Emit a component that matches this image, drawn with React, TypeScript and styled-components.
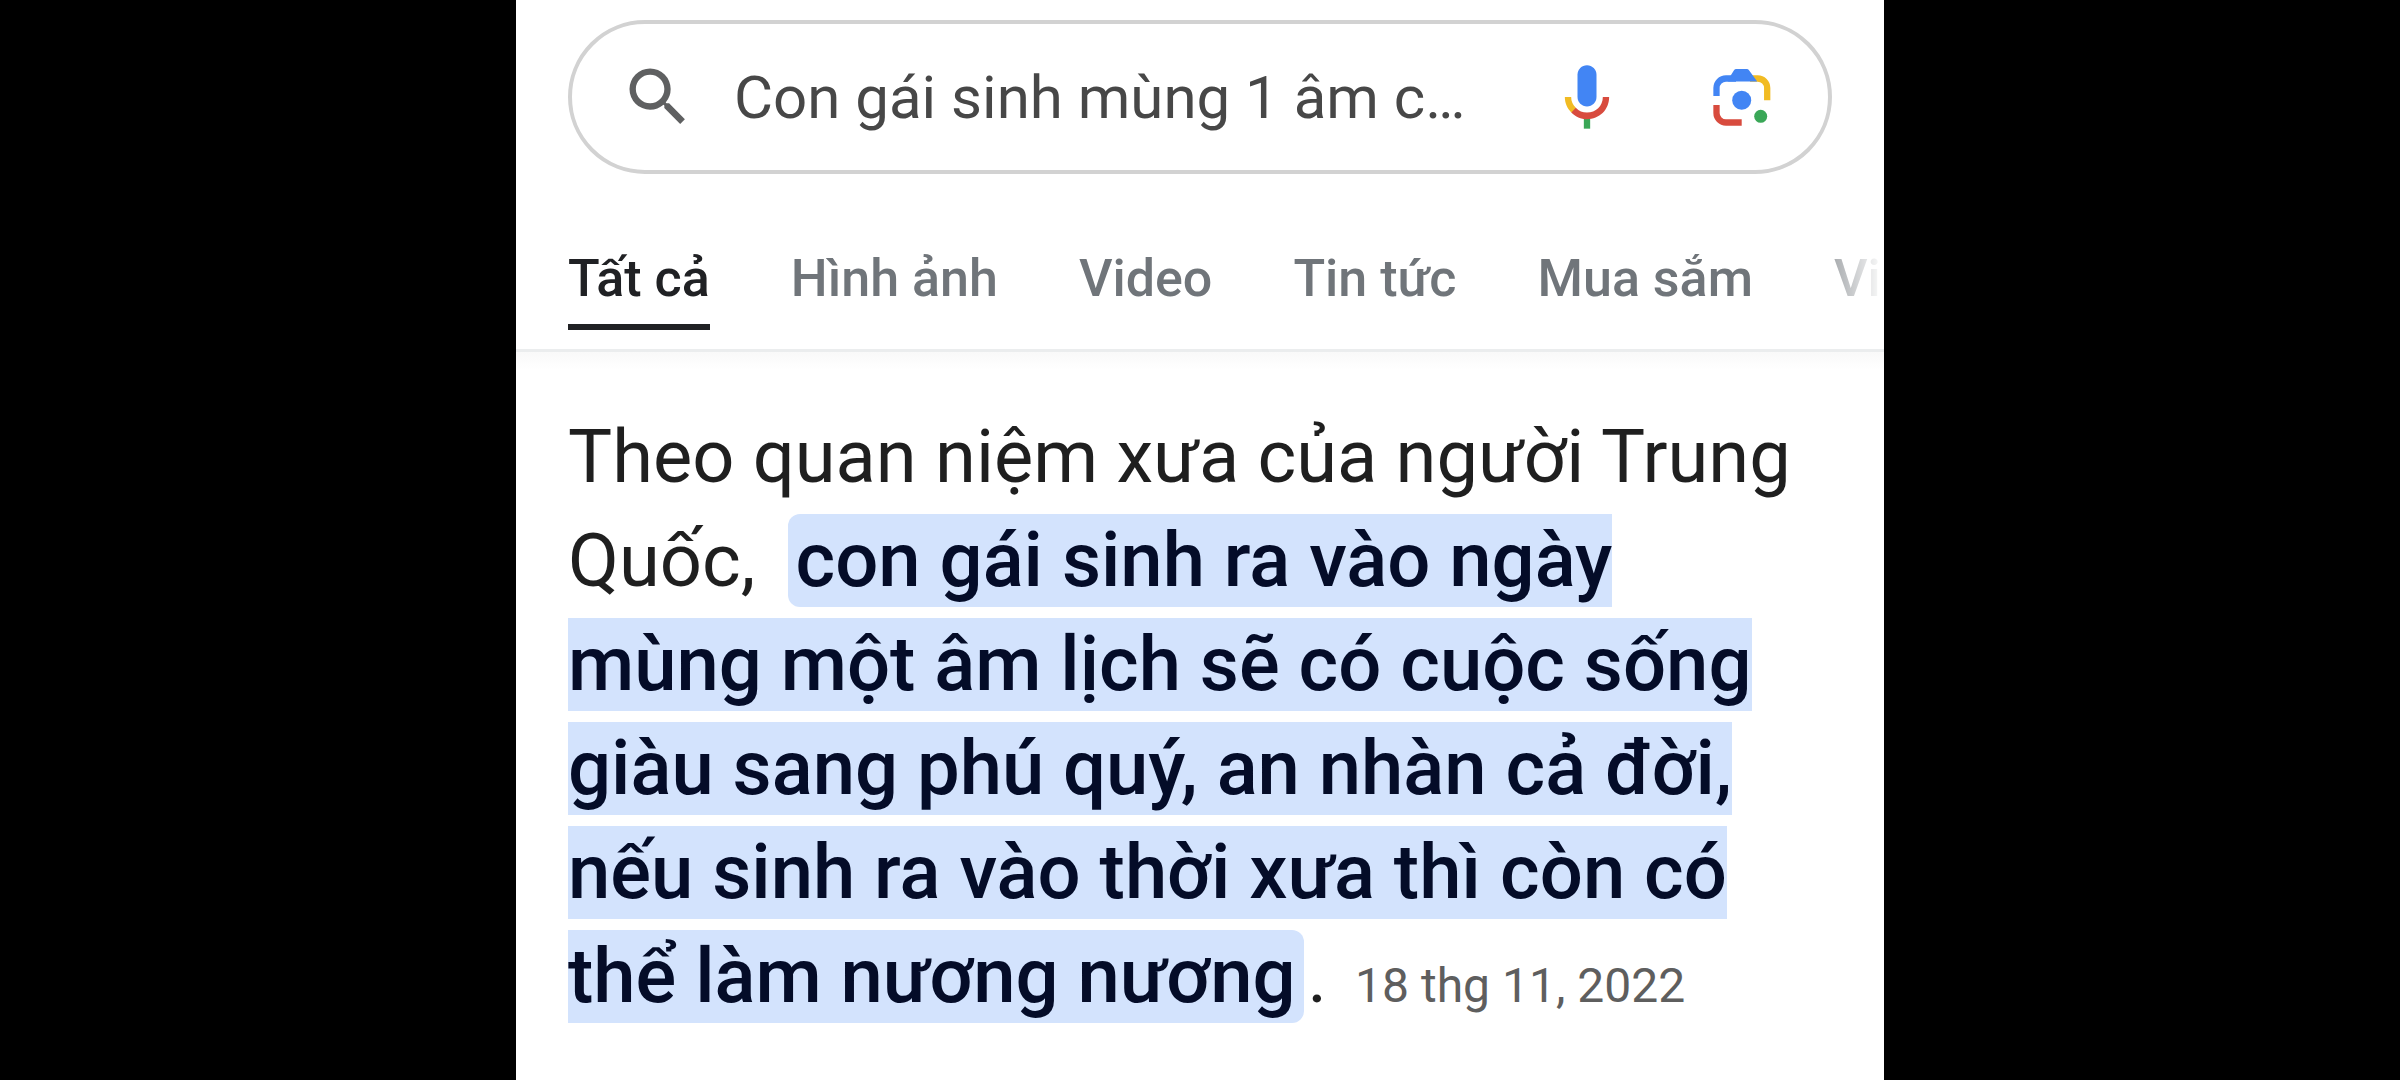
import React from "react";
import styled, { createGlobalStyle } from "styled-components";

const GlobalStyle = createGlobalStyle`
  *, *::before, *::after { box-sizing: border-box; }
  body {
    margin: 0;
    background: #000;
    font-family: Roboto, "Noto Sans", sans-serif;
  }
`;

const Page = styled.main`
  width: 57%;
  min-height: 100vh;
  margin: 0 auto;
  padding-top: 20px;
  background: #fff;
  overflow: hidden;
`;

const SearchBox = styled.form`
  display: flex;
  align-items: center;
  height: 154px;
  margin: 0 52px;
  padding: 0 48px;
  border: 4px solid #d2d2d2;
  border-radius: 77px;
`;

const Glyph = styled.svg`
  display: block;
  flex: none;
  width: 76px;
  height: 76px;
`;

const Query = styled.input`
  flex: 1;
  min-width: 0;
  margin: 0 24px 0 38px;
  padding: 2px 0 0;
  border: 0;
  outline: 0;
  background: transparent;
  color: #474747;
  font: 400 60px/72px Roboto, "Noto Sans", sans-serif;
`;

const Actions = styled.div`
  display: flex;
  gap: 79px;
`;

const IconButton = styled.button`
  padding: 0;
  border: 0;
  background: none;
  cursor: pointer;
`;

const Tabs = styled.nav`
  display: flex;
  gap: 81px;
  padding: 75px 0 19px 52px;
  overflow: hidden;
  white-space: nowrap;
  mask-image: linear-gradient(to left, transparent 0, #000 84px);
`;

const Tab = styled.a<{ $active?: boolean }>`
  flex: none;
  padding-bottom: 15px;
  border-bottom: 6px solid ${(p) => (p.$active ? "#202124" : "transparent")};
  color: ${(p) => (p.$active ? "#202124" : "#70757a")};
  font-size: 52px;
  font-weight: 500;
  line-height: 60px;
  text-decoration: none;
`;

const Results = styled.section`
  padding: 53px 84px 0 52px;
  border-top: 3px solid #ebedee;
  background: linear-gradient(#f9f9f9, #fff 18px);
`;

const Answer = styled.p`
  margin: 0;
  color: #1f1f1f;
  font-size: 74px;
  line-height: 104px;
`;

const Highlight = styled.mark`
  margin: 0 4px 0 14px;
  padding: 1px 8px 2px;
  border-radius: 12px;
  background: #d3e3fd;
  color: #040c28;
  font-size: 76px;
  font-weight: 500;
  line-height: 100px;
`;

const PublishDate = styled.time`
  margin-left: 28px;
  color: #5e5e5e;
  font-size: 48px;
  line-height: 60px;
`;

const tabs = ["Tất cả", "Hình ảnh", "Video", "Tin tức", "Mua sắm", "Video ngắn"];

const SearchIcon = () => (
  <Glyph viewBox="0 0 24 24" fill="#5f6061" aria-hidden="true">
    <path d="M15.5 14h-.79l-.28-.27A6.471 6.471 0 0 0 16 9.5 6.5 6.5 0 1 0 9.5 16c1.61 0 3.09-.59 4.23-1.57l.27.28v.79l5 4.99L20.49 19l-4.99-5zm-6 0C7.01 14 5 11.99 5 9.5S7.01 5 9.5 5 14 7.01 14 9.5 11.99 14 9.5 14z" />
  </Glyph>
);

const MicIcon = () => (
  <Glyph viewBox="0 0 24 24" aria-hidden="true">
    <path fill="#4285f4" d="M12 15c1.66 0 3-1.31 3-2.97V5.01C15 3.35 13.66 2 12 2S9 3.34 9 5.01v7.02C9 13.69 10.34 15 12 15z" />
    <path fill="#3aa757" d="M11 18.08h2V22h-2z" />
    <path fill="#f1bb23" d="M7.05 16.87C5.78 15.54 5 14.04 5 12h2c0 1.45.56 2.42 1.47 3.38v.32l-1.15 1.18z" />
    <path fill="#d84b3e" d="M12 16.93a4.97 5.25 0 0 1-3.54-1.55l-1.41 1.49C8.31 18.21 10.07 19 12 19c3.87 0 6.99-2.92 6.99-7H17c0 2.92-2.24 4.93-5 4.93z" />
  </Glyph>
);

const LensIcon = () => (
  <Glyph viewBox="0 0 76 76" fill="none" strokeWidth="6.3" aria-hidden="true">
    <path stroke="#f1bb23" d="M46 19.5h7.7a9.5 9.5 0 0 1 9.5 9.5v12.3" />
    <path stroke="#4285f4" d="M12.5 37v-8a9.5 9.5 0 0 1 9.5-9.5h10" />
    <path fill="#4285f4" d="M26.7 16.4 30 11.2q.8-1.2 2.2-1.2h10.6q1.4 0 2.2 1.2l8.2 11.4H24z" />
    <path stroke="#d84b3e" d="M12.5 46v8a9.5 9.5 0 0 0 9.5 9.5h15.7" />
    <circle fill="#4285f4" cx="37.7" cy="41.3" r="9.5" />
    <circle fill="#3aa757" cx="56.7" cy="57.3" r="6.5" />
  </Glyph>
);

export default function App() {
  return (
    <>
      <GlobalStyle />
      <Page>
        <SearchBox role="search" onSubmit={(e) => e.preventDefault()}>
          <SearchIcon />
          <Query aria-label="Tìm kiếm" defaultValue="Con gái sinh mùng 1 âm c…" />
          <Actions>
            <IconButton type="button" aria-label="Tìm kiếm bằng giọng nói">
              <MicIcon />
            </IconButton>
            <IconButton type="button" aria-label="Tìm kiếm bằng hình ảnh">
              <LensIcon />
            </IconButton>
          </Actions>
        </SearchBox>
        <Tabs>
          {tabs.map((label, i) => (
            <Tab key={label} href="#" $active={i === 0} aria-current={i === 0 ? "page" : undefined}>
              {label}
            </Tab>
          ))}
        </Tabs>
        <Results>
          <Answer>
            Theo quan niệm xưa của người Trung Quốc,{" "}
            <Highlight>
              con gái sinh ra vào ngày mùng một âm lịch sẽ có cuộc sống giàu sang phú quý, an nhàn
              cả đời, nếu sinh ra vào thời xưa thì còn có thể làm nương nương
            </Highlight>
            .<PublishDate dateTime="2022-11-18">18 thg 11, 2022</PublishDate>
          </Answer>
        </Results>
      </Page>
    </>
  );
}
